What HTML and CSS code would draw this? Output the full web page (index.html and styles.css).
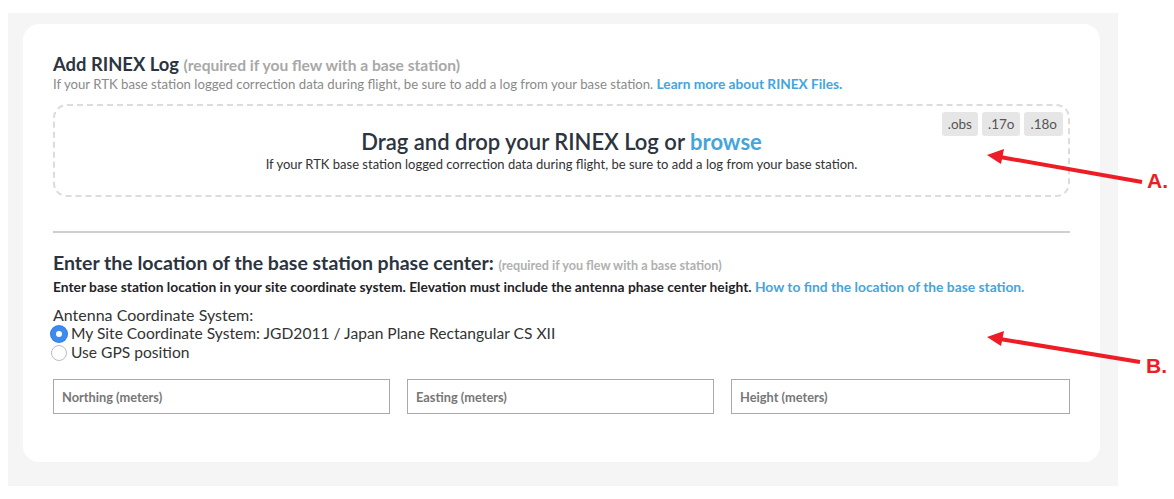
FILE: index.html
```html
<!DOCTYPE html>
<html>
<head>
<meta charset="utf-8">
<link rel="stylesheet" href="styles.css">
</head>
<body>
<div class="frame">
  <div class="card">
    <h2 class="title">Add RINEX Log <span class="req">(required if you flew with a base station)</span></h2>
    <p class="sub">If your RTK base station logged correction data during flight, be sure to add a log from your base station. <a class="link">Learn more about RINEX Files.</a></p>
    <div class="drop">
      <div class="chips"><span class="chip">.obs</span><span class="chip">.17o</span><span class="chip">.18o</span></div>
      <div class="drop-title">Drag and drop your RINEX Log or <a class="link">browse</a></div>
      <div class="drop-sub">If your RTK base station logged correction data during flight, be sure to add a log from your base station.</div>
    </div>
    <hr class="rule">
    <h2 class="title2">Enter the location of the base station phase center: <span class="req2">(required if you flew with a base station)</span></h2>
    <p class="bold-line">Enter base station location in your site coordinate system. Elevation must include the antenna phase center height. <a class="link">How to find the location of the base station.</a></p>
    <div class="coord-label">Antenna Coordinate System:</div>
    <div class="radio-row"><span class="radio checked"></span>My Site Coordinate System: JGD2011 / Japan Plane Rectangular CS XII</div>
    <div class="radio-row"><span class="radio"></span>Use GPS position</div>
    <div class="inputs">
      <div class="field n">Northing (meters)</div>
      <div class="field e">Easting (meters)</div>
      <div class="field h">Height (meters)</div>
    </div>
  </div>
</div>
<svg class="notes" width="1174" height="499" viewBox="0 0 1174 499">
  <line x1="1142" y1="182" x2="1000" y2="157" stroke="#ee1c25" stroke-width="4"/>
  <polygon points="987,155 1004,149 1001,164" fill="#ee1c25"/>
  <line x1="1140" y1="362" x2="1000" y2="339" stroke="#ee1c25" stroke-width="4"/>
  <polygon points="987,337 1004,331 1001,346" fill="#ee1c25"/>
</svg>
<div class="note note-a">A.</div>
<div class="note note-b">B.</div>
</body>
</html>
```
FILE: styles.css
```css
body {
  margin: 0;
  background: #fff;
  font-family: Lato, "Open Sans", sans-serif;
  position: relative;
  width: 1174px;
  height: 499px;
  overflow: hidden;
}
.frame {
  margin: 13px 0 0 8px;
  width: 1110px;
  height: 473px;
  background: #f5f5f5;
  padding: 11px 18px 24px 15px;
  box-sizing: border-box;
}
.card {
  background: #fff;
  border-radius: 16px;
  height: 438px;
  padding: 29px 30px 0 30px;
  box-sizing: border-box;
}
.title {
  margin: 0;
  font-size: 18.4px;
  line-height: 22px;
  font-weight: 700;
  color: #2c3440;
}
.req {
  font-size: 15.6px;
  color: #a8a8a8;
}
.sub {
  margin: -1px 0 0;
  font-size: 13.2px;
  line-height: 17px;
  color: #8a8a8a;
}
.link {
  color: #45a5da;
  font-weight: 700;
}
.sub .link {
  font-size: 13.7px;
}
.drop {
  position: relative;
  margin-top: 11px;
  height: 93px;
  border: 2px dashed #dcdcdc;
  border-radius: 14px;
  box-sizing: border-box;
  text-align: center;
  padding-top: 23px;
}
.chips {
  position: absolute;
  top: 6px;
  right: 5px;
  display: flex;
  gap: 4px;
}
.chip {
  background: #e6e6e6;
  border-radius: 3px;
  height: 24px;
  line-height: 24px;
  padding: 0 6px;
  font-size: 13.5px;
  color: #555;
}
.drop-title {
  font-size: 22px;
  line-height: 26px;
  font-weight: 600;
  color: #2c3440;
}
.drop-sub {
  font-size: 13px;
  line-height: 16px;
  color: #333;
  margin-top: 1px;
}
.rule {
  margin: 34px 0 0;
  border: 0;
  border-top: 2px solid #cfcfcf;
  height: 0;
}
.title2 {
  margin: 19px 0 0;
  font-size: 19.5px;
  line-height: 22px;
  font-weight: 700;
  color: #2c3440;
}
.req2 {
  font-size: 12.6px;
  color: #b0b0b0;
}
.bold-line {
  margin: 1px 0 0;
  font-size: 13.8px;
  line-height: 18px;
  font-weight: 700;
  color: #1f2328;
}
.coord-label {
  margin-top: 9px;
  font-size: 16px;
  line-height: 19px;
  color: #333;
}
.radio-row {
  display: flex;
  align-items: center;
  font-size: 15.6px;
  line-height: 19px;
  color: #333;
  margin-left: -2px;
}
.radio {
  width: 16px;
  height: 16px;
  border-radius: 50%;
  box-sizing: border-box;
  border: 1px solid #bdbdbd;
  background: #fff;
  margin-right: 4px;
  flex: none;
}
.radio.checked {
  border: 5px solid #3d8bf0;
  background: #fff;
  box-shadow: 0 0 0 1px #2f7de0;
}
.inputs {
  display: flex;
  gap: 17px;
  margin-top: 17px;
}
.field {
  height: 35px;
  border: 1px solid #aaa;
  box-sizing: border-box;
  padding-left: 8px;
  display: flex;
  align-items: center;
  font-size: 12.8px;
  font-weight: 700;
  color: #777;
}
.field.n { width: 337px; }
.field.e { width: 307px; }
.field.h { flex: 1; }
.notes {
  position: absolute;
  left: 0;
  top: 0;
  pointer-events: none;
}
.note {
  position: absolute;
  font-family: "Liberation Sans", Arial, sans-serif;
  font-weight: 700;
  font-size: 21px;
  color: #ee1c25;
}
.note-a { left: 1147px; top: 169px; }
.note-b { left: 1146px; top: 354px; }
```
